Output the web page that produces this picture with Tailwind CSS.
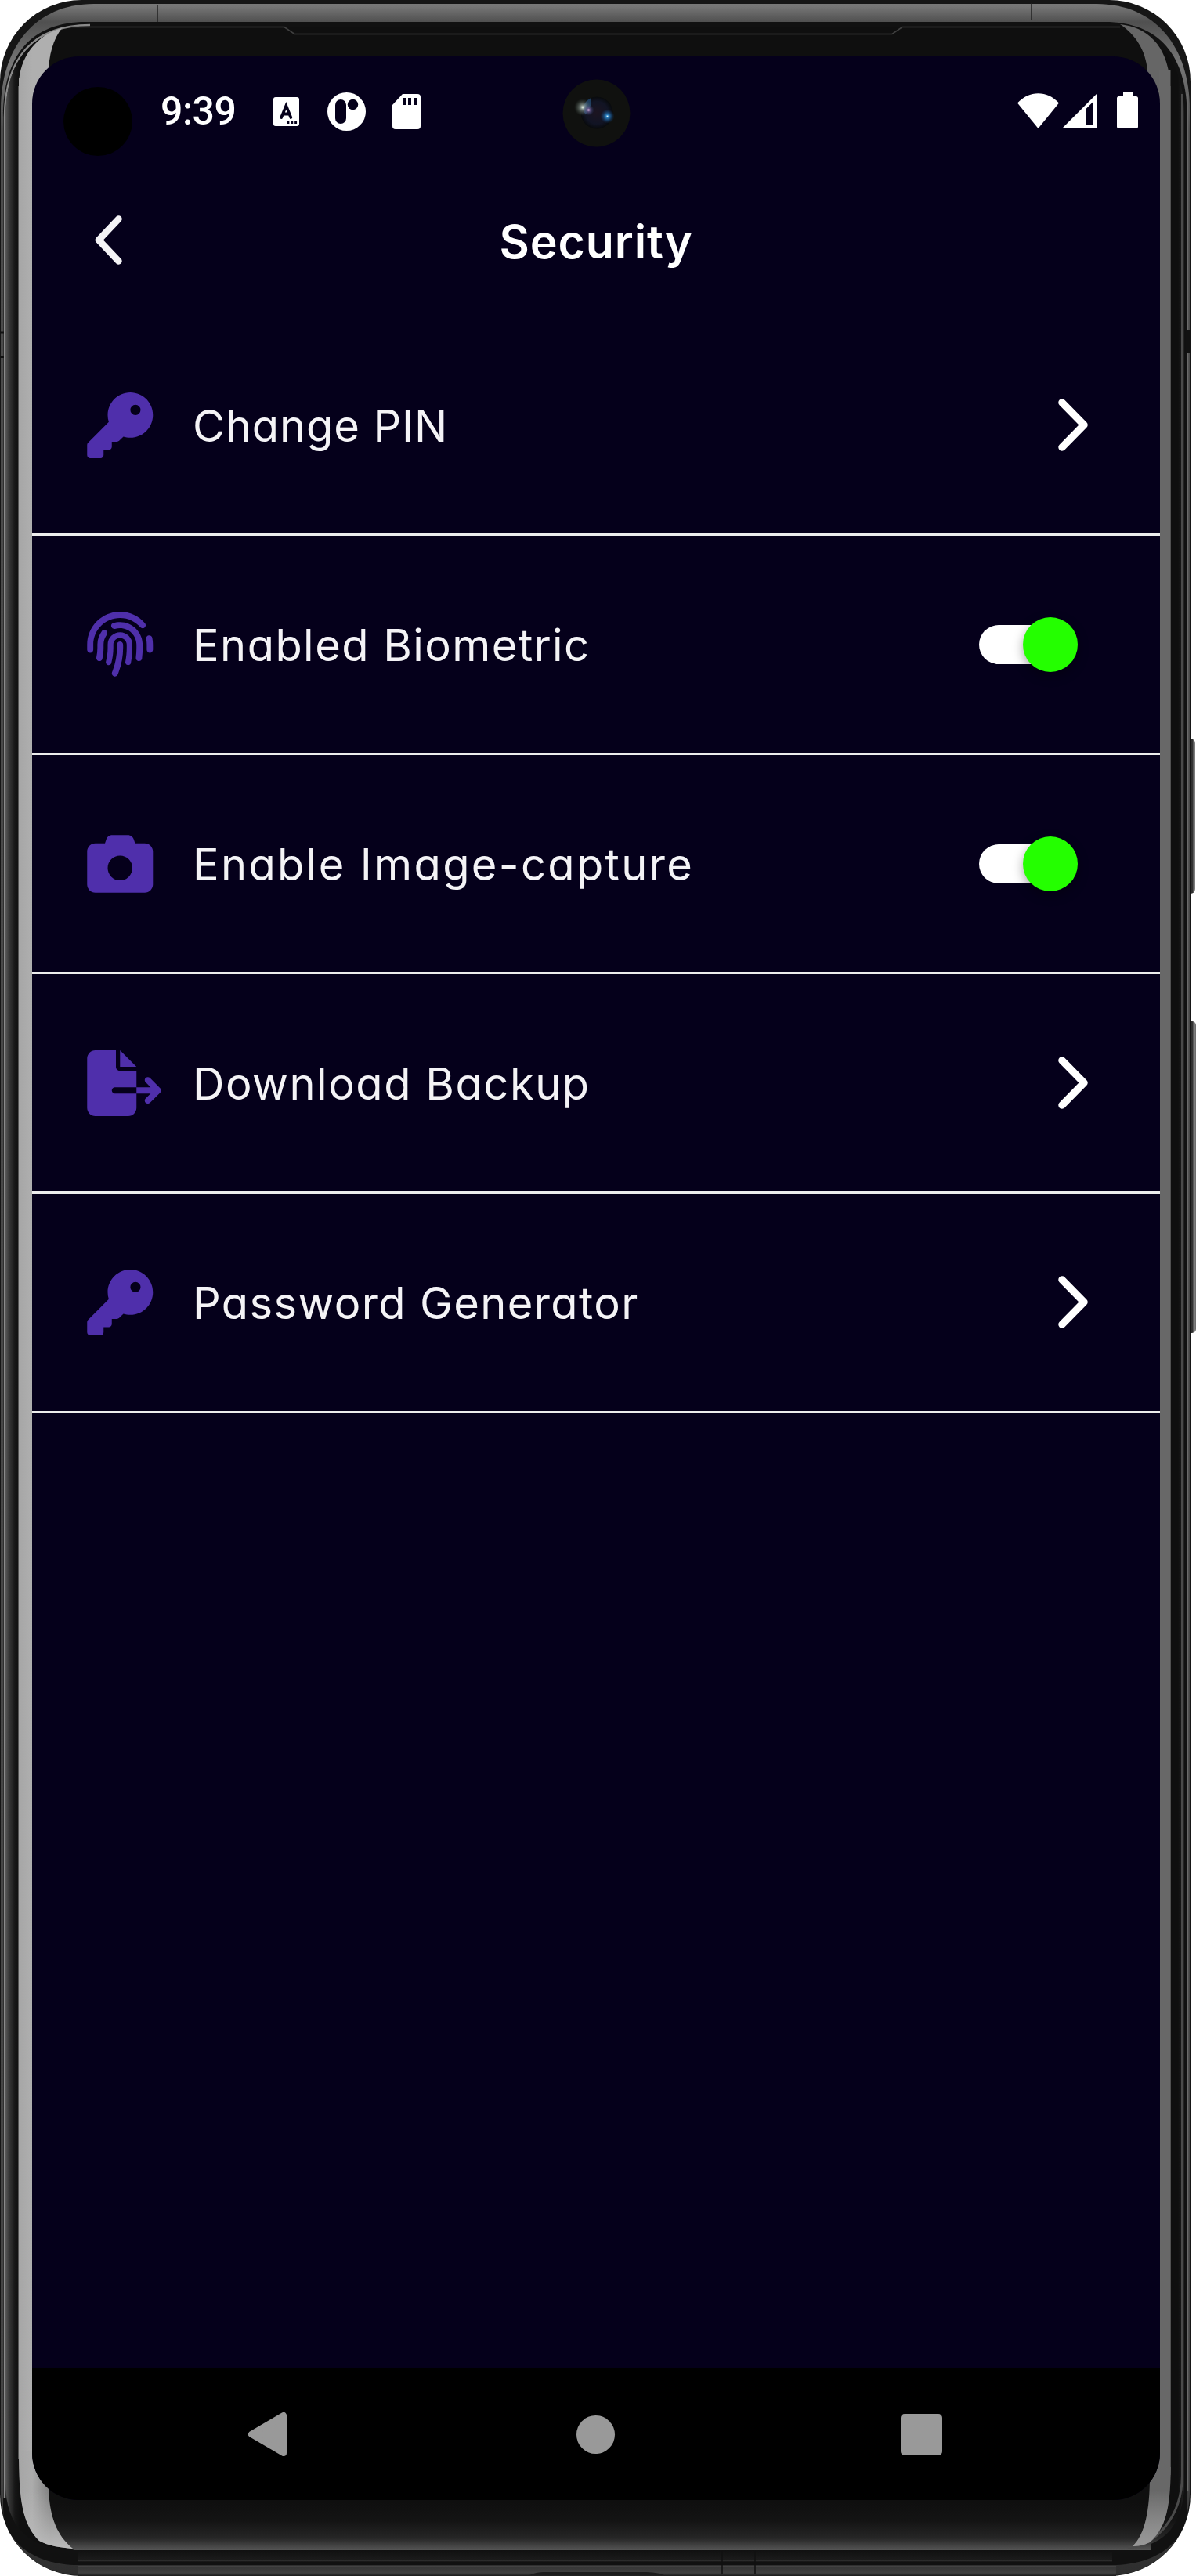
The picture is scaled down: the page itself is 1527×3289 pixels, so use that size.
<!DOCTYPE html>
<html lang="en">
<head>
<meta charset="utf-8">
<title>Security</title>
<script src="https://cdn.jsdelivr.net/npm/@tailwindcss/browser@4"></script>
</head>
<body class="bg-white">
<div class="relative w-[1527px] h-[3289px] overflow-hidden pt-[72px] pl-[41px]">

  <!-- Device body -->
  <svg class="absolute inset-0" width="1527" height="3289" viewBox="0 0 1527 3289" fill="none" aria-hidden="true">
    <defs>
      <linearGradient id="rim" x1="0" y1="0" x2="0" y2="3289" gradientUnits="userSpaceOnUse">
        <stop offset="0" stop-color="#7a7a7a"/><stop offset=".0025" stop-color="#767676"/><stop offset=".0085" stop-color="#505050"/><stop offset=".025" stop-color="#777"/><stop offset=".05" stop-color="#4c4c4c"/><stop offset=".96" stop-color="#444"/><stop offset="1" stop-color="#2d2d2d"/>
      </linearGradient>
      <linearGradient id="glass" x1="7" y1="0" x2="1513" y2="0" gradientUnits="userSpaceOnUse">
        <stop offset="0" stop-color="#5a5a5a"/><stop offset=".003" stop-color="#383838"/><stop offset=".008" stop-color="#161616"/><stop offset=".012" stop-color="#0f0f0f"/><stop offset=".994" stop-color="#0f0f0f"/><stop offset=".998" stop-color="#1c1c1c"/><stop offset="1" stop-color="#2c2c2c"/>
      </linearGradient>
      <linearGradient id="foot" x1="0" y1="3195" x2="0" y2="3256" gradientUnits="userSpaceOnUse">
        <stop offset="0" stop-color="#0f0f0f"/><stop offset=".4" stop-color="#141414"/><stop offset=".75" stop-color="#262626"/><stop offset="1" stop-color="#555"/>
      </linearGradient>
      <linearGradient id="glareL" x1="24" y1="0" x2="41" y2="0" gradientUnits="userSpaceOnUse"><stop offset="0" stop-color="#a6a6a6"/><stop offset="1" stop-color="#afafaf"/></linearGradient>
      <linearGradient id="glareLB" x1="24" y1="0" x2="64" y2="0" gradientUnits="userSpaceOnUse"><stop offset="0" stop-color="#a6a6a6"/><stop offset=".42" stop-color="#acacac"/><stop offset="1" stop-color="#808080"/></linearGradient>
      <linearGradient id="shine" x1="0" y1="3180" x2="0" y2="3254" gradientUnits="userSpaceOnUse"><stop offset="0" stop-color="#bbb" stop-opacity="0"/><stop offset="1" stop-color="#bbb"/></linearGradient>
      <linearGradient id="shineR" x1="0" y1="3180" x2="0" y2="3252" gradientUnits="userSpaceOnUse"><stop offset="0" stop-color="#aaa" stop-opacity="0"/><stop offset="1" stop-color="#999"/></linearGradient>
      <linearGradient id="key" x1="1518" y1="0" x2="1527" y2="0" gradientUnits="userSpaceOnUse"><stop offset="0" stop-color="#222"/><stop offset=".5" stop-color="#333"/><stop offset=".75" stop-color="#8a8a8a"/><stop offset="1" stop-color="#666"/></linearGradient>
      <linearGradient id="base" x1="0" y1="3256" x2="0" y2="3289" gradientUnits="userSpaceOnUse"><stop offset="0" stop-color="#101010"/><stop offset=".4" stop-color="#1c1c1c"/><stop offset=".41" stop-color="#2c2c2c"/><stop offset=".45" stop-color="#111"/><stop offset=".58" stop-color="#111"/><stop offset=".6" stop-color="#4a4a4a"/><stop offset=".66" stop-color="#363636"/><stop offset=".88" stop-color="#404040"/><stop offset="1" stop-color="#1c1c1c"/></linearGradient>
    </defs>
    <rect x="1512" y="943" width="14" height="198" rx="6" fill="url(#key)"/>
    <rect x="1512" y="1304" width="15" height="398" rx="5" fill="url(#key)"/>
    <rect x="0" y="0" width="1520" height="3289" rx="104" fill="#161616"/>
    <path d="M1 140C1 60 45 5 120 5H1400C1475 5 1519 60 1519 140V3180C1519 3241 1477 3288 1416 3288H104C42 3288 1 3241 1 3180Z" fill="url(#rim)"/>
    <path d="M100 3256H1425V3289H100Z" fill="url(#base)"/>
    <path d="M201 6v23M1317 4v22" stroke="#222" stroke-width="1.5"/>
    <path d="M4 3200V150C4 70 40 28 110 28H1410C1480 28 1516 70 1516 150V3200C1516 3244 1478 3275 1420 3275V3256H100V3275C42 3275 4 3244 4 3200Z" fill="#111"/>
    <path d="M6 3190V150C6 74 42 32 115 32" stroke="#8a8a8a" stroke-width="2.5"/>
    <path d="M1516.5 120V3180" stroke="#6a6a6a" stroke-width="1.6"/>
    <path d="M7 3170V150C7 78 40 35 110 35H1410C1480 35 1512 78 1512 150V3170C1512 3226 1482 3256 1425 3256H95C37 3256 7 3226 7 3170Z" fill="url(#glass)"/>
    <path d="M64 3192H1470V3256H95C75 3250 64 3230 64 3192Z" fill="url(#foot)"/>
    <path d="M1470 3192H1508C1506 3234 1474 3256 1425 3256H1400V3192Z" fill="url(#foot)"/>
    <path d="M1509.500 120V3160C1509 3215 1475 3250 1440 3253" stroke="#4a4a4a" stroke-width="3"/>
    <path d="M90 34.500H363L376 43.500H1139L1152 34.500H1430" stroke="#404040" stroke-width="1.600"/>
    <path d="M24 110C24 72 48 44 79 36C68 50 62 70 62 95V150H24Z" fill="url(#glareL)"/>
    <path d="M24 100H42V3130H24Z" fill="url(#glareL)"/>
    <path d="M24 3130H62V3176C63 3214 73 3238 93 3254C78 3253 60 3250 50 3244C28 3222 24 3190 24 3130Z" fill="url(#glareLB)"/>
    <path d="M24 3130H62V3176C63 3214 73 3238 93 3254C78 3253 60 3250 50 3244C28 3222 24 3190 24 3130Z" fill="url(#shine)"/>
    <path d="M23.500 110V3140" stroke="#555" stroke-width="1"/>
    <path d="M1430 31C1464 35 1490 56 1494 105V150H1465V90C1463 65 1450 44 1430 31Z" fill="#666"/>
    <path d="M1480 90H1494.500V3160H1480Z" fill="#686868"/>
    <path d="M1468 3130H1495C1495 3190 1493 3224 1468 3246C1460 3250 1452 3251 1446 3251C1462 3236 1468 3206 1468 3160Z" fill="#686868"/>
    <path d="M1468 3130H1495C1495 3190 1493 3224 1468 3246C1460 3250 1452 3251 1446 3251C1462 3236 1468 3206 1468 3160Z" fill="url(#shineR)"/>
    <path d="M1494.500 110V3150" stroke="#505050" stroke-width="1"/>
    <path d="M922 3257v30M964 3257v30" stroke="#111" stroke-width="1.500"/>
    <path d="M676 3288C685 3284 690 3284 700 3284H820C835 3284 840 3285 848 3288Z" fill="#1c1c1c"/>
    <path d="M0 424.500H5M0 456H5" stroke="#111" stroke-width="2"/>
    <path d="M1516.500 421V451" stroke="#111" stroke-width="6"/>
  </svg>

  <!-- Screen -->
  <main class="relative flex flex-col w-[1440px] h-[3120px] rounded-[60px] overflow-hidden bg-[#05001b] text-white font-[Inter,sans-serif]">
    <header class="flex items-center h-[136px] pl-10 pr-[28px]">
      <div class="w-[88px] h-[88px] rounded-full bg-black mt-[30px]"></div>
      <span class="ml-[36px] mt-[3px] w-[98px] font-[Roboto,sans-serif] font-medium text-[50px] leading-none tracking-[-0.5px] whitespace-nowrap">9:39</span>
      <svg class="ml-[46px] mt-1" width="33" height="37" viewBox="0 0 34 37" preserveAspectRatio="none"><rect width="34" height="37" rx="3" fill="#fff"/><path d="M10.500 26L16.800 11L23 26M12.500 21.500H21" fill="none" stroke="#05001b" stroke-width="3.800" stroke-linecap="round"/><path d="M18 31h3v3h-3zM23 31h3v3h-3zM28 31h3v3h-3z" fill="#05001b"/></svg>
      <svg class="ml-[36px] mt-1" width="49" height="49" viewBox="0 0 49 49"><circle cx="24.500" cy="24.500" r="24.500" fill="#fff"/><rect x="10" y="9" width="14" height="31" rx="7" fill="#05001b"/><circle cx="32.500" cy="15.500" r="6.700" fill="#05001b"/></svg>
      <svg class="ml-[34px] mt-1" width="36" height="45" viewBox="0 0 36 45"><path d="M13 0H32a4 4 0 0 1 4 4V41a4 4 0 0 1-4 4H4a4 4 0 0 1-4-4V14Z" fill="#fff"/><path d="M13.500 5h4v9h-4zM20 5h4v9h-4zM27 5h4v9h-4z" fill="#05001b"/></svg>
      <div class="flex items-center ml-auto mt-[2px]">
        <svg width="53" height="45" viewBox="0 0 53 45"><path d="M26.500 45L0 12.500C15-4 38-4 53 12.500Z" fill="#fff"/></svg>
        <svg class="ml-1" width="45" height="45" viewBox="0 0 45 45"><path fill-rule="evenodd" d="M45 0V45H0ZM40 10.500L31 19.500V41H40Z" fill="#fff"/></svg>
        <svg class="ml-[25px]" width="27" height="46" viewBox="0 0 27 46"><path d="M8 0H20V5H24.500A2.500 2.500 0 0 1 27 7.500V43.500A2.500 2.500 0 0 1 24.500 46H2.500A2.500 2.500 0 0 1 0 43.500V7.500A2.500 2.500 0 0 1 2.500 5H8Z" fill="#fff"/></svg>
      </div>
    </header>

    <div class="relative flex items-center justify-center h-[196px]">
      <svg class="absolute left-[79px] top-[67px]" width="36" height="63" viewBox="0 0 36 63"><path d="M31.500 4.500L6 31.500L31.500 58.500" fill="none" stroke="#f4f3f6" stroke-width="8.500" stroke-linecap="round" stroke-linejoin="round"/></svg>
      <h1 class="text-[59px] leading-none font-semibold tracking-[0.9px] whitespace-nowrap mt-[4px]">Security</h1>
    </div>

    <ul class="text-[#f4f3f6] text-[56px] leading-none [font-feature-settings:'cv11']">
      <li class="flex items-center h-[280px] pl-[70px] pr-[92px] border-b-[3px] border-[#ededed]">
        <svg class="w-[95px] h-[84px]" viewBox="0 0 576 512" fill="#4f2fab"><path d="M336 352c97.200 0 176-78.800 176-176S433.200 0 336 0S160 78.800 160 176c0 18.700 2.900 36.800 8.300 53.700L7 391c-4.500 4.500-7 10.600-7 17v80c0 13.300 10.700 24 24 24h80c13.300 0 24-10.700 24-24V448h40c13.300 0 24-10.700 24-24V384h40c6.400 0 12.500-2.500 17-7l33.300-33.300c16.900 5.400 35 8.300 53.700 8.300zM376 96a40 40 0 1 1 0 80 40 40 0 1 1 0-80z"/></svg>
        <span class="ml-[40px] mt-[2px] whitespace-nowrap tracking-[0.9px]">Change PIN</span>
        <svg class="ml-auto" width="38" height="67" viewBox="0 0 38 67"><path d="M5 5L33 33.500L5 62" fill="none" stroke="#fff" stroke-width="9.500" stroke-linecap="round" stroke-linejoin="round"/></svg>
      </li>
      <li class="flex items-center h-[280px] pl-[70px] pr-[105px] border-b-[3px] border-[#ededed]">
        <svg class="w-[95px] h-[84px]" viewBox="0 0 576 512" fill="#4f2fab"><path d="M48 256C48 141.100 141.100 48 256 48c63.100 0 119.600 28.100 157.800 72.500c8.600 10.100 23.800 11.200 33.800 2.600s11.200-23.800 2.600-33.800C403.300 34.600 333.700 0 256 0C114.600 0 0 114.600 0 256v40c0 13.300 10.700 24 24 24s24-10.700 24-24V256zm458.500-52.900c-2.700-13-15.500-21.300-28.400-18.500s-21.300 15.500-18.500 28.400c2.900 13.900 4.500 28.300 4.500 43.100v40c0 13.300 10.700 24 24 24s24-10.700 24-24V256c0-18.100-1.900-35.800-5.500-52.900zM256 80c-19 0-37.400 3-54.500 8.600c-15.200 5-18.700 23.700-8.300 35.900c7.100 8.300 18.800 10.800 29.400 7.900c10.600-2.900 21.800-4.400 33.400-4.400c70.700 0 128 57.300 128 128v24.900c0 25.200-1.500 50.300-4.400 75.300c-1.700 14.600 9.400 27.800 24.200 27.800c11.800 0 21.900-8.600 23.300-20.300c3.300-27.400 5-55 5-82.700V256c0-97.200-78.800-176-176-176zM150.700 148.700c-9.100-10.600-25.300-11.400-33.900-.4C93.700 178 80 215.400 80 256v24.900c0 24.200-2.600 48.400-7.800 71.900C68.800 368.400 80.100 384 96.100 384c10.500 0 19.900-7 22.200-17.300c6.400-28.100 9.700-56.800 9.700-85.800V256c0-27.200 8.500-52.400 22.900-73.100c7.200-10.400 8-24.600-.2-34.200zM256 160c-53 0-96 43-96 96v24.900c0 35.900-4.600 71.500-13.800 106.100c-3.800 14.300 6.700 29 21.500 29c9.500 0 17.900-6.200 20.400-15.400c10.500-39 15.900-79.200 15.900-119.700V256c0-28.700 23.300-52 52-52s52 23.300 52 52v24.900c0 36.300-3.500 72.400-10.400 107.900c-2.700 13.900 7.700 27.200 21.800 27.200c10.200 0 19-7 21-17c7.700-38.800 11.600-78.300 11.600-118.100V256c0-53-43-96-96-96zm24 96c0-13.300-10.700-24-24-24s-24 10.700-24 24v24.900c0 59.900-11 119.300-32.500 175.200l-5.900 15.300c-4.800 12.400 1.400 26.300 13.800 31s26.300-1.400 31-13.800l5.900-15.300C267.900 411.900 280 346.700 280 280.900V256z"/></svg>
        <span class="ml-[40px] mt-[2px] whitespace-nowrap tracking-[1.45px]">Enabled Biometric</span>
        <div class="ml-auto flex items-center justify-end w-[119px] h-[50px] rounded-full bg-white mr-[7px]"><div class="w-[70px] h-[70px] shrink-0 rounded-full bg-[#24ff00] -mr-[7px] shadow-[0_5px_14px_rgba(0,0,0,0.35)]"></div></div>
      </li>
      <li class="flex items-center h-[280px] pl-[70px] pr-[105px] border-b-[3px] border-[#ededed]">
        <svg class="w-[95px] h-[84px]" viewBox="0 0 576 512" fill="#4f2fab"><path d="M149.100 64.800L138.700 96H64C28.700 96 0 124.700 0 160V416c0 35.300 28.700 64 64 64H448c35.300 0 64-28.700 64-64V160c0-35.300-28.700-64-64-64H373.300L362.900 64.800C356.400 45.200 338.100 32 317.400 32H194.600c-20.700 0-39 13.200-45.500 32.800zM256 192a96 96 0 1 1 0 192 96 96 0 1 1 0-192z"/></svg>
        <span class="ml-[40px] mt-[2px] whitespace-nowrap tracking-[2.35px]">Enable Image-capture</span>
        <div class="ml-auto flex items-center justify-end w-[119px] h-[50px] rounded-full bg-white mr-[7px]"><div class="w-[70px] h-[70px] shrink-0 rounded-full bg-[#24ff00] -mr-[7px] shadow-[0_5px_14px_rgba(0,0,0,0.35)]"></div></div>
      </li>
      <li class="flex items-center h-[280px] pl-[70px] pr-[92px] border-b-[3px] border-[#ededed]">
        <svg class="w-[95px] h-[84px]" viewBox="0 0 576 512" fill="#4f2fab"><path d="M0 64C0 28.700 28.700 0 64 0H224V128c0 17.700 14.300 32 32 32H384V288H216c-13.300 0-24 10.700-24 24s10.700 24 24 24H384V448c0 35.300-28.700 64-64 64H64c-35.300 0-64-28.700-64-64V64zM384 336V288H494.100l-39-39c-9.400-9.400-9.400-24.600 0-33.900s24.600-9.400 33.900 0l80 80c9.400 9.400 9.400 24.600 0 33.900l-80 80c-9.400 9.400-24.600 9.400-33.900 0s-9.400-24.600 0-33.900l39-39H384zm0-208H256V0L384 128z"/></svg>
        <span class="ml-[40px] mt-[2px] whitespace-nowrap tracking-[1.55px]">Download Backup</span>
        <svg class="ml-auto" width="38" height="67" viewBox="0 0 38 67"><path d="M5 5L33 33.500L5 62" fill="none" stroke="#fff" stroke-width="9.500" stroke-linecap="round" stroke-linejoin="round"/></svg>
      </li>
      <li class="flex items-center h-[280px] pl-[70px] pr-[92px] border-b-[3px] border-[#ededed]">
        <svg class="w-[95px] h-[84px]" viewBox="0 0 576 512" fill="#4f2fab"><path d="M336 352c97.200 0 176-78.800 176-176S433.200 0 336 0S160 78.800 160 176c0 18.700 2.900 36.800 8.300 53.700L7 391c-4.500 4.500-7 10.600-7 17v80c0 13.300 10.700 24 24 24h80c13.300 0 24-10.700 24-24V448h40c13.300 0 24-10.700 24-24V384h40c6.400 0 12.500-2.500 17-7l33.300-33.300c16.900 5.400 35 8.300 53.700 8.300zM376 96a40 40 0 1 1 0 80 40 40 0 1 1 0-80z"/></svg>
        <span class="ml-[40px] mt-[2px] whitespace-nowrap tracking-[1.4px]">Password Generator</span>
        <svg class="ml-auto" width="38" height="67" viewBox="0 0 38 67"><path d="M5 5L33 33.500L5 62" fill="none" stroke="#fff" stroke-width="9.500" stroke-linecap="round" stroke-linejoin="round"/></svg>
      </li>
    </ul>

    <nav class="mt-auto flex items-center justify-between h-[168px] pl-[276px] pr-[278px] bg-black">
      <svg width="49" height="56" viewBox="0 0 49 56"><path d="M4 28L45 4V52Z" fill="#999" stroke="#999" stroke-width="8" stroke-linejoin="round"/></svg>
      <div class="w-[49px] h-[49px] rounded-full bg-[#999] mr-[-5px]"></div>
      <div class="w-[53px] h-[53px] rounded-[5px] bg-[#999]"></div>
    </nav>
  </main>

  <!-- Front camera -->
  <svg class="absolute left-[718px] top-[101px]" width="87" height="87" viewBox="0 0 87 87" aria-hidden="true">
    <defs>
      <radialGradient id="lens"><stop offset="0" stop-color="#1c1420"/><stop offset=".7" stop-color="#111424"/><stop offset="1" stop-color="#080a0c"/></radialGradient>
      <radialGradient id="flare"><stop offset="0" stop-color="#f0fff0"/><stop offset=".25" stop-color="#a8b8b0" stop-opacity=".7"/><stop offset="1" stop-color="#405048" stop-opacity="0"/></radialGradient>
      <radialGradient id="blue"><stop offset="0" stop-color="#d8f4ff"/><stop offset=".2" stop-color="#2a80c0"/><stop offset="1" stop-color="#103a70" stop-opacity="0"/></radialGradient>
      <radialGradient id="pink"><stop offset="0" stop-color="#f0c8f0"/><stop offset=".3" stop-color="#6a5a90" stop-opacity=".8"/><stop offset="1" stop-color="#304070" stop-opacity="0"/></radialGradient>
    </defs>
    <circle cx="43.500" cy="43.500" r="43" fill="#10110f"/>
    <circle cx="44" cy="43" r="20.500" fill="url(#lens)"/>
    <path d="M27 36C28 30 32 26 37 24L36 34L30 45C27 42 26 39 27 36Z" fill="#2c5c8c" fill-opacity=".6"/>
    <circle cx="26" cy="36" r="11" fill="url(#flare)"/>
    <circle cx="33.500" cy="39.500" r="7" fill="url(#pink)"/>
    <circle cx="57.500" cy="47.500" r="9" fill="url(#blue)"/>
  </svg>
</div>
</body>
</html>
